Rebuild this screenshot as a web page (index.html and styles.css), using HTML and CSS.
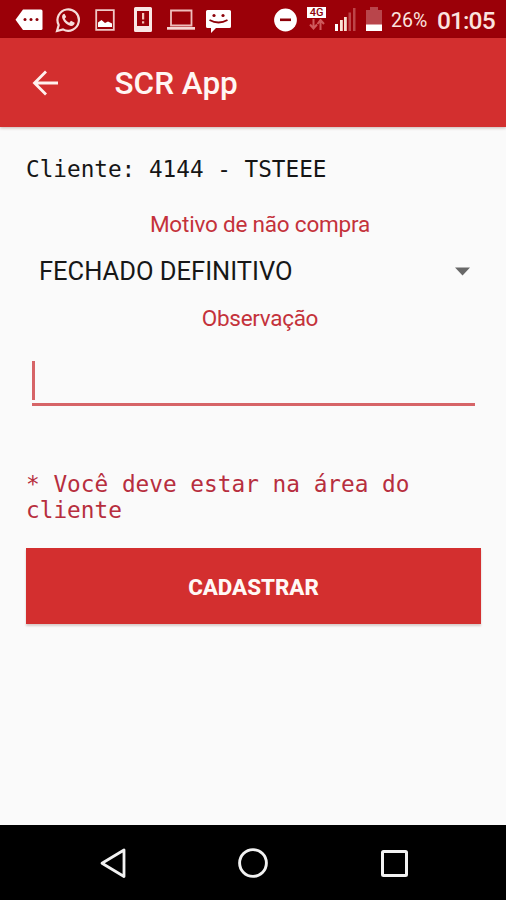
FILE: index.html
```html
<!DOCTYPE html>
<html lang="pt-BR">
<head>
<meta charset="utf-8">
<title>SCR App</title>
<meta name="viewport" content="width=device-width, initial-scale=1">
<link rel="stylesheet" href="styles.css">
</head>
<body>
<div class="screen">
  <div class="status">
    <div class="notifications">
      <svg width="28" height="26" viewBox="0 0 28 26"><path fill="#fff" d="M8 2.500h18q1.500 0 1.500 1.500v17.500q0 1.500-1.500 1.500H8L.5 12.700z"/><g fill="#8d0008"><circle cx="10" cy="12.500" r="1.500"/><circle cx="16" cy="12.500" r="1.500"/><circle cx="22" cy="12.500" r="1.500"/></g></svg>
      <svg width="26" height="26" viewBox="0 0 26 26"><path fill="none" stroke="#f6dcda" stroke-width="2.200" d="M2 24l1.700-6A10.700 10.700 0 1 1 8 22.400z"/><path fill="#f6dcda" d="M9.500 6.800c-2.200.3-3 2.600-2 4.900 1.700 3.900 4.700 6.500 8.300 7.200 2 .3 3.800-1 3.900-3.200L16 13.800l-1.700 1.900c-2-.8-3.500-2.200-4.500-4.200l1.400-1.500z"/></svg>
      <svg width="20" height="26" viewBox="0 0 20 26"><path fill="none" stroke="#efc9c7" stroke-width="1.800" d="M1.200 3.200h17.600v19.600H1.200z"/><path fill="#fff" d="M3 20v-4.500l3.500-2.500 3.500 3 3-1.500 4 2V20z"/></svg>
      <svg width="18" height="26" viewBox="0 0 18 26"><path fill="#f9e6e4" fill-rule="evenodd" d="M1.500 0h15q1.500 0 1.500 1.500v22q0 1.500-1.500 1.500h-15Q0 25 0 23.500v-22Q0 0 1.500 0zM3 4v15h12V4z"/><path fill="#f4c5b9" d="M8 6h2.200v6.500H8zM8 14.200h2.200v2.300H8z"/></svg>
      <svg width="28" height="26" viewBox="0 0 28 26"><path fill="none" stroke="#efbdbb" stroke-width="1.800" d="M4 3.500h20.500v15H4z"/><path fill="#f5d4d2" d="M0 20h28v2.700H0z"/></svg>
      <svg width="25" height="26" viewBox="0 0 25 26"><path fill="#fff" d="M1.500 3h22q1.500 0 1.500 1.500v15q0 1.500-1.500 1.500H10l-5 5v-5H1.500Q0 21 0 19.500v-15Q0 3 1.500 3z"/><g fill="#8d0008"><circle cx="8" cy="8.500" r="1.600"/><circle cx="17" cy="8.500" r="1.600"/></g><path fill="none" stroke="#8d0008" stroke-width="1.800" d="M3.500 13q9 5 18 0"/></svg>
    </div>
    <div class="system">
      <svg class="dnd" width="23" height="24" viewBox="0 0 23 24"><circle cx="11.500" cy="12" r="11.400" fill="#fff"/><path fill="#8d0008" d="M6 10.500h11v2.600H6z"/></svg>
      <div class="network">
        <span class="network-type">4G</span>
        <svg width="16" height="11" viewBox="0 0 16 11"><path fill="none" stroke="#cf5a5c" stroke-width="2" d="M4.500 0v9M1 5.500l3.500 4L8 5.500M11.500 11V2M8.500 5l3-4 3.500 4"/></svg>
      </div>
      <svg class="signal" width="21" height="23" viewBox="0 0 21 23"><path fill="#fff" d="M0 16h3v7H0z"/><path fill="#fbe5d8" d="M5 12h2.800v11H5z"/><path fill="#f7dccf" d="M9 9h2.800v14H9z"/><path fill="#bd4549" d="M13.500 4.500h2.500V23h-2.500zM18 0h2.500v23H18z"/></svg>
      <svg class="battery" width="16" height="24" viewBox="0 0 16 24"><path fill="#b9454b" d="M4 0h8v3h4v15H0V3h4z"/><path fill="#fff" d="M0 17.500h16V24H0z"/></svg>
      <span class="percent">26%</span>
      <span class="clock">01:05</span>
    </div>
  </div>
  <header class="appbar">
    <svg width="28" height="28" viewBox="0 0 28 28"><path fill="none" stroke="#fff1ee" stroke-width="2.800" d="M26 14H3M14 2.500L2.500 14 14 25.500"/></svg>
    <h1>SCR App</h1>
  </header>
  <main>
    <p class="client">Cliente: 4144 - TSTEEE</p>
    <p class="label reason">Motivo de não compra</p>
    <div class="select"><span>FECHADO DEFINITIVO</span><svg width="16" height="9" viewBox="0 0 16 9"><path fill="#686868" d="M1 .5h15L8.500 8.500z"/></svg></div>
    <p class="label note">Observação</p>
    <div class="field"><span class="caret"></span></div>
    <p class="warning">* Você deve estar na área do cliente</p>
    <button class="submit" type="button">CADASTRAR</button>
  </main>
  <nav class="navbar">
    <svg width="30" height="32" viewBox="0 0 30 32"><path fill="none" stroke="#f2f2f2" stroke-width="2.800" stroke-linejoin="round" d="M25 3v26.500L3 16.200z"/></svg>
    <svg width="32" height="32" viewBox="0 0 32 32"><circle cx="15" cy="16" r="13.400" fill="none" stroke="#f2f2f2" stroke-width="2.900"/></svg>
    <svg width="30" height="32" viewBox="0 0 30 32"><rect x="3.500" y="4.500" width="24" height="24" rx="1" fill="none" stroke="#f2f2f2" stroke-width="3"/></svg>
  </nav>
</div>
</body>
</html>
```
FILE: styles.css
```css
* { box-sizing: border-box; }
body, h1, p { margin: 0; }
body { background: #fafafa; font-family: Roboto, sans-serif; }
svg { display: block; flex: none; }

.screen { display: flex; flex-direction: column; width: 506px; height: 900px; overflow: hidden; }

.status { display: flex; justify-content: space-between; height: 38px; padding: 7px 12px 0 15px; background: #9b0008; color: #fbe3df; }
.notifications { display: flex; gap: 12px; }
.notifications svg:nth-child(3) { margin-left: 2px; }
.notifications svg:nth-child(4) { margin-left: 7px; }
.notifications svg:nth-child(5) { margin-left: 3px; }
.notifications svg:nth-child(6) { margin-left: -1px; }
.system { display: flex; }
.dnd { margin-top: 1px; }
.network { display: flex; flex-direction: column; align-items: center; width: 19px; margin-left: 10px; }
.network-type { width: 19px; height: 11px; background: #fff; color: #8d0008; font-size: 11px; font-weight: 500; line-height: 12px; text-align: center; }
.network svg { margin-top: 1px; }
.signal { margin: 1px 0 0 9px; }
.battery { margin-left: 10px; }
.percent { width: 36px; margin-left: 9px; font-size: 19.500px; line-height: 27px; white-space: nowrap; }
.clock { width: 57px; margin-left: 10px; font-size: 24.500px; font-weight: 500; letter-spacing: -.9px; line-height: 27px; white-space: nowrap; }

.appbar { display: flex; align-items: center; height: 89px; padding: 0 32px; background: #d32f2f; box-shadow: 0 1px 3px rgba(80, 20, 10, .3); color: #fff6f3; }
.appbar h1 { margin: 2px 0 0 54.500px; font-size: 31.500px; font-weight: 500; line-height: 36px; }

main { flex: 1; padding: 29px 25px 0 26px; }
.client, .warning { font-family: "DejaVu Sans Mono", monospace; font-size: 22.700px; line-height: 26px; }
.client { color: #151515; }
.label { color: #c4323b; font-size: 22.500px; letter-spacing: -.2px; line-height: 26px; text-align: center; }
.reason { margin-top: 29px; padding-left: 13px; }
.select { display: flex; align-items: center; justify-content: space-between; height: 40px; margin-top: 14px; padding: 0 11px 0 13px; color: #171717; font-size: 25.500px; }
.note { margin-top: 14px; padding-left: 13px; letter-spacing: -.3px; }
.field { height: 46px; margin: 29px 6px 0; padding-top: 1px; border-bottom: 3px solid #d66467; }
.caret { display: block; width: 3px; height: 39px; background: #d66467; }
.warning { margin-top: 65px; color: #b72e3e; font-size: 22.750px; }
.submit { display: block; width: 100%; height: 76px; margin-top: 25px; padding: 0; border: 0; background: #d32f2f; box-shadow: 0 2px 2px rgba(80, 20, 10, .2); color: #fff8f5; font: 800 22.300px/78px Roboto, sans-serif; }

.navbar { display: flex; align-items: center; justify-content: space-between; height: 75px; padding: 1px 97px 0 99px; background: #000; }
```
